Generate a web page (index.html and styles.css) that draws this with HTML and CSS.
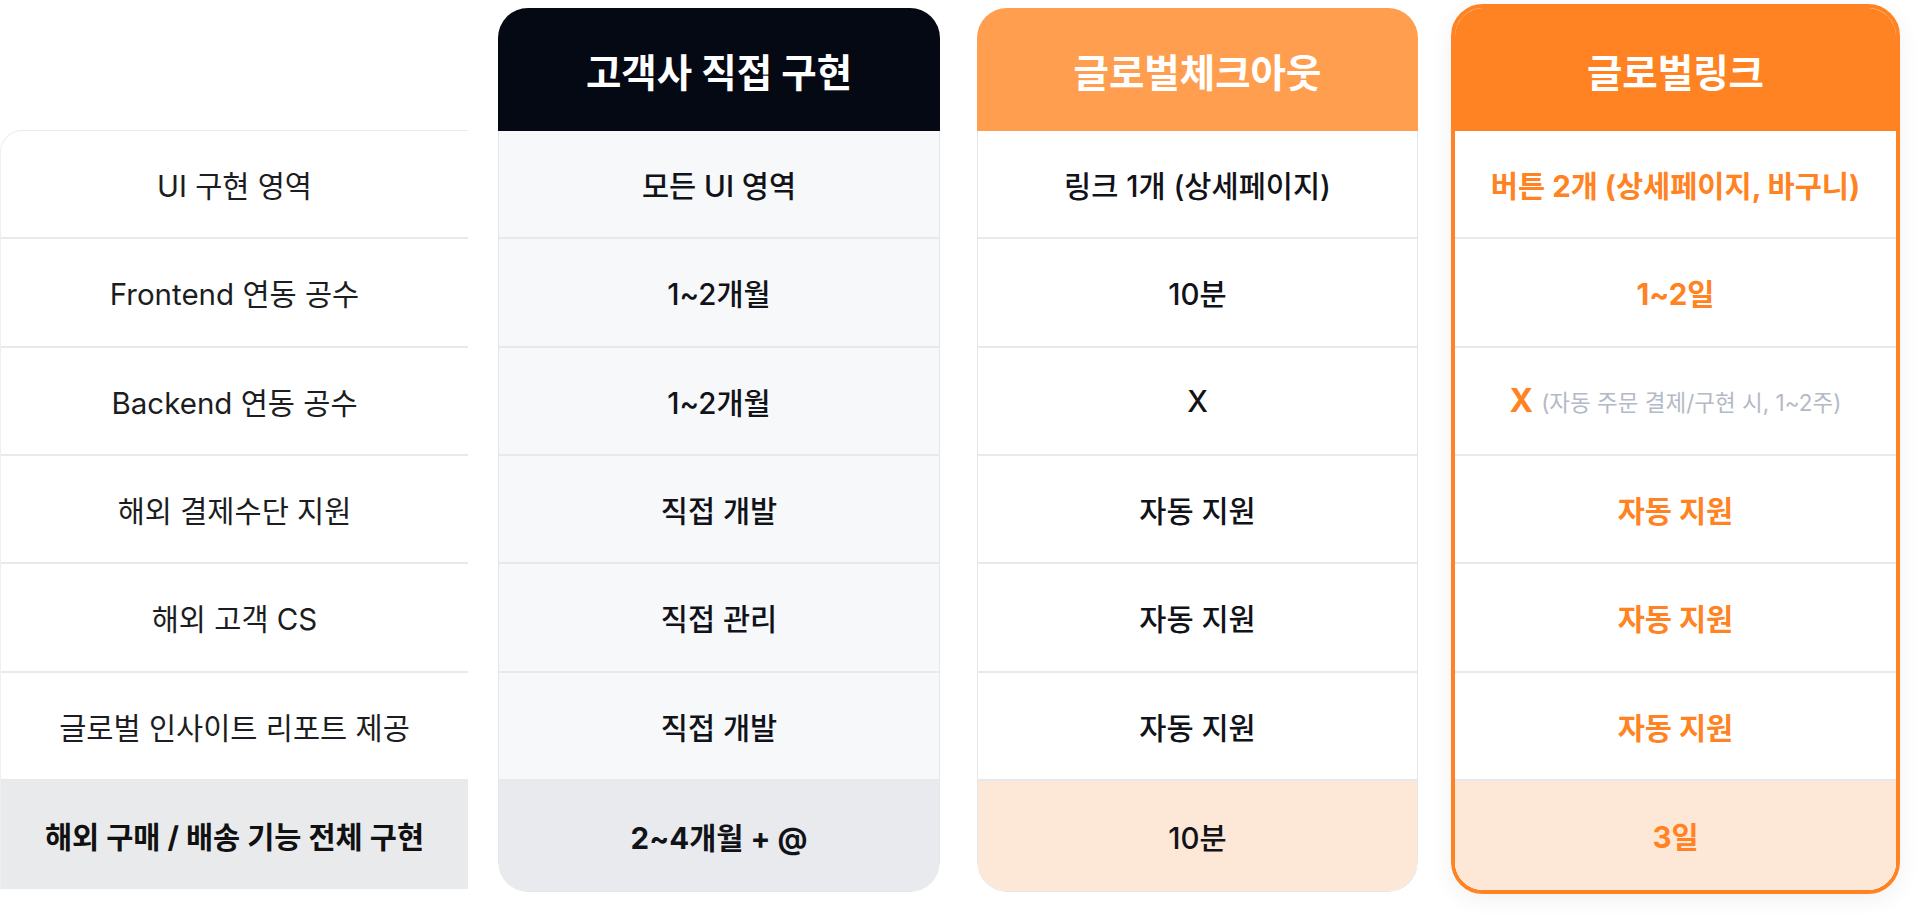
FILE: index.html
```html
<!DOCTYPE html>
<html lang="ko">
<head>
<meta charset="utf-8">
<title>비교표</title>
<link rel="stylesheet" href="styles.css">
</head>
<body>
<div class="table">
  <div class="labels">
    <div class="cell">UI 구현 영역</div>
    <div class="cell">Frontend 연동 공수</div>
    <div class="cell">Backend 연동 공수</div>
    <div class="cell">해외 결제수단 지원</div>
    <div class="cell">해외 고객 CS</div>
    <div class="cell">글로벌 인사이트 리포트 제공</div>
    <div class="cell total">해외 구매 / 배송 기능 전체 구현</div>
  </div>
  <div class="cards">
    <div class="card card-direct">
      <div class="head">고객사 직접 구현</div>
      <div class="body">
        <div class="cell">모든 UI 영역</div>
        <div class="cell">1~2개월</div>
        <div class="cell">1~2개월</div>
        <div class="cell">직접 개발</div>
        <div class="cell">직접 관리</div>
        <div class="cell">직접 개발</div>
        <div class="cell total">2~4개월 + @</div>
      </div>
    </div>
    <div class="card card-checkout">
      <div class="head">글로벌체크아웃</div>
      <div class="body">
        <div class="cell">링크 1개 (상세페이지)</div>
        <div class="cell">10분</div>
        <div class="cell">X</div>
        <div class="cell">자동 지원</div>
        <div class="cell">자동 지원</div>
        <div class="cell">자동 지원</div>
        <div class="cell total">10분</div>
      </div>
    </div>
    <div class="card card-link">
      <div class="head">글로벌링크</div>
      <div class="body">
        <div class="cell">버튼 2개 (상세페이지, 바구니)</div>
        <div class="cell">1~2일</div>
        <div class="cell"><span class="x">X</span><span class="note">(자동 주문 결제/구현 시, 1~2주)</span></div>
        <div class="cell">자동 지원</div>
        <div class="cell">자동 지원</div>
        <div class="cell">자동 지원</div>
        <div class="cell total">3일</div>
      </div>
    </div>
  </div>
</div>
</body>
</html>
```
FILE: styles.css
```css
* { box-sizing: border-box; }
html, body { margin: 0; padding: 0; background: #ffffff; }
body {
  font-family: Inter, "Noto Sans CJK KR", sans-serif;
  color: #111318;
  width: 1919px;
  height: 914px;
  overflow: hidden;
}
.table {
  display: flex;
  gap: 30px;
  padding-top: 8px;
}
.labels {
  width: 468px;
  margin-top: 122px;
  border-top: 1px solid #e8e9ec;
  border-left: 1px solid #eeeff1;
  border-top-left-radius: 22px;
  overflow: hidden;
  display: flex;
  flex-direction: column;
  height: 759px;
}
.cell {
  height: 108.33px;
  flex: none;
  display: flex;
  align-items: center;
  justify-content: center;
  border-bottom: 2px solid #e8e9ec;
  font-size: 29.5px;
  white-space: nowrap;
}
.labels .cell { color: #1c1d21; font-weight: 400; }
.labels .cell.total {
  flex: 1;
  height: auto;
  border-bottom: none;
  background: #e9eaec;
  font-weight: 700;
  color: #111;
}
.cards {
  display: flex;
  gap: 37px;
}
.card {
  width: 442px;
  height: 884px;
  border-radius: 30px;
  overflow: hidden;
  display: flex;
  flex-direction: column;
}
.card-checkout, .card-link { width: 441px; }
.head {
  height: 123px;
  flex: none;
  display: flex;
  align-items: center;
  justify-content: center;
  color: #ffffff;
  font-size: 38.5px;
  font-weight: 700;
}
.body {
  flex: 1;
  display: flex;
  flex-direction: column;
  border: 1px solid #e4e6ea;
  border-top: none;
  border-radius: 0 0 30px 30px;
  overflow: hidden;
}
.body .cell { font-weight: 500; }
.body .cell.total {
  flex: 1;
  height: auto;
  border-bottom: none;
}
.card-direct .head { background: #050913; }
.card-direct .body { background: #f7f8fa; }
.card-direct .cell.total { background: #e9eaed; font-weight: 700; }
.card-checkout .head { background: #ff9e4f; }
.card-checkout .body { background: #ffffff; }
.card-checkout .cell.total { background: #fde8d8; font-weight: 500; }
.card-link {
  margin: -4px;
  height: 890px;
  width: 449px;
  border: 4px solid #ff8322;
  border-radius: 32px;
  box-shadow: 0 6px 24px rgba(0, 0, 0, 0.06);
}
.card-link .head { background: #ff8322; height: 123px; }
.card-link .body { border: none; border-radius: 0; background: #ffffff; }
.card-link .cell { color: #ff8322; font-weight: 700; }
.card-link .cell.total { background: #fde8d8; }
.card-link .x { font-size: 32px; font-weight: 700; margin-right: 8px; }
.card-link .note { font-size: 22.5px; font-weight: 400; color: #b3bac5; }
```
